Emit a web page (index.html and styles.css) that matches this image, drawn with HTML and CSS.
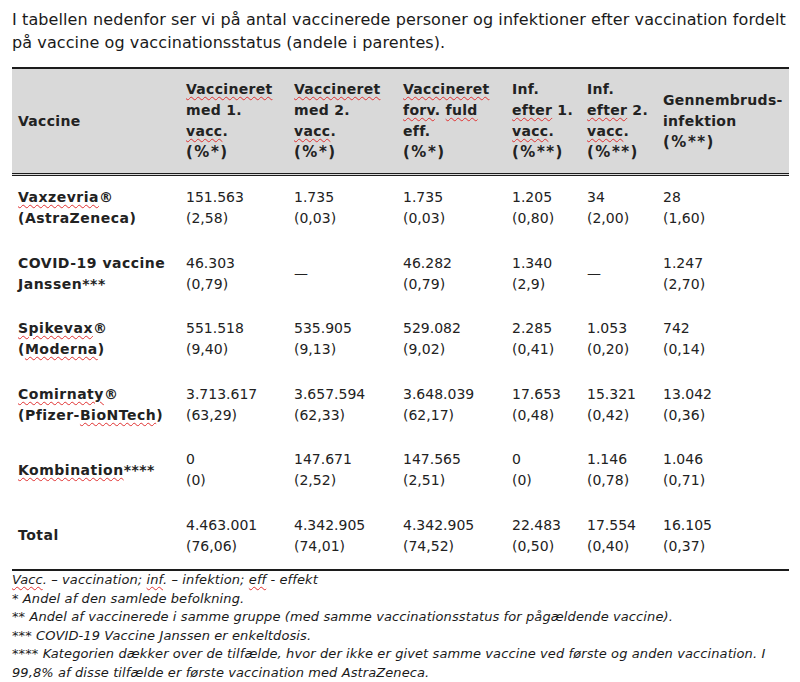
FILE: index.html
```html
<!DOCTYPE html>
<html lang="da">
<head>
<meta charset="utf-8">
<title>Vaccinationstabel</title>
<link rel="stylesheet" href="styles.css">
</head>
<body>
<p class="intro">I tabellen nedenfor ser vi på antal vaccinerede personer og infektioner efter vaccination fordelt på vaccine og vaccinationsstatus (andele i parentes).</p>
<table class="vt">
  <colgroup>
    <col class="c1"><col class="c2"><col class="c3"><col class="c4"><col class="c5"><col class="c6"><col class="c7">
  </colgroup>
  <thead>
    <tr>
      <th>Vaccine</th>
      <th><span class="sp">Vaccineret</span><br>med 1.<br><span class="sp">vacc</span>.<br><span class="pct">(%*)</span></th>
      <th><span class="sp">Vaccineret</span><br>med 2.<br><span class="sp">vacc</span>.<br><span class="pct">(%*)</span></th>
      <th><span class="sp">Vaccineret</span><br><span class="sp">forv</span>. <span class="sp">fuld</span><br>eff.<br><span class="pct">(%*)</span></th>
      <th>Inf.<br><span class="sp">efter</span> 1.<br><span class="sp">vacc</span>.<br><span class="pct">(%**)</span></th>
      <th>Inf.<br><span class="sp">efter</span> 2.<br><span class="sp">vacc</span>.<br><span class="pct">(%**)</span></th>
      <th>Gennembruds-<br>infektion<br><span class="pct">(%**)</span></th>
    </tr>
  </thead>
  <tbody>
    <tr>
      <td class="name"><span class="sp">Vaxzevria</span>®<br>(AstraZeneca)</td>
      <td>151.563<br>(2,58)</td><td>1.735<br>(0,03)</td><td>1.735<br>(0,03)</td><td>1.205<br>(0,80)</td><td>34<br>(2,00)</td><td>28<br>(1,60)</td>
    </tr>
    <tr>
      <td class="name">COVID-19 vaccine<br>Janssen***</td>
      <td>46.303<br>(0,79)</td><td>—</td><td>46.282<br>(0,79)</td><td>1.340<br>(2,9)</td><td>—</td><td>1.247<br>(2,70)</td>
    </tr>
    <tr>
      <td class="name"><span class="sp">Spikevax</span>®<br>(<span class="sp">Moderna</span>)</td>
      <td>551.518<br>(9,40)</td><td>535.905<br>(9,13)</td><td>529.082<br>(9,02)</td><td>2.285<br>(0,41)</td><td>1.053<br>(0,20)</td><td>742<br>(0,14)</td>
    </tr>
    <tr>
      <td class="name"><span class="sp">Comirnaty</span>®<br>(Pfizer-<span class="sp">BioNTech</span>)</td>
      <td>3.713.617<br>(63,29)</td><td>3.657.594<br>(62,33)</td><td>3.648.039<br>(62,17)</td><td>17.653<br>(0,48)</td><td>15.321<br>(0,42)</td><td>13.042<br>(0,36)</td>
    </tr>
    <tr>
      <td class="name"><span class="sp">Kombination</span>****</td>
      <td>0<br>(0)</td><td>147.671<br>(2,52)</td><td>147.565<br>(2,51)</td><td>0<br>(0)</td><td>1.146<br>(0,78)</td><td>1.046<br>(0,71)</td>
    </tr>
    <tr>
      <td class="name">Total</td>
      <td>4.463.001<br>(76,06)</td><td>4.342.905<br>(74,01)</td><td>4.342.905<br>(74,52)</td><td>22.483<br>(0,50)</td><td>17.554<br>(0,40)</td><td>16.105<br>(0,37)</td>
    </tr>
  </tbody>
</table>
<div class="notes">
  <p><span class="sp">Vacc</span>. – vaccination; <span class="sp">inf</span>. – infektion; <span class="sp">eff</span> - effekt</p>
  <p>* Andel af den samlede befolkning.</p>
  <p>** Andel af vaccinerede i samme gruppe (med samme vaccinationsstatus for pågældende vaccine).</p>
  <p>*** COVID-19 Vaccine Janssen er enkeltdosis.</p>
  <p>**** Kategorien dækker over de tilfælde, hvor der ikke er givet samme vaccine ved første og anden vaccination. I 99,8% af disse tilfælde er første vaccination med AstraZeneca.</p>
</div>
</body>
</html>
```
FILE: styles.css
```css
html, body {
  margin: 0;
  padding: 0;
  background: #ffffff;
}
body {
  font-family: "DejaVu Sans", Verdana, sans-serif;
  color: #222222;
  padding: 8px 8px 0 12px;
}
.intro {
  margin: 0;
  width: 782px;
  font-size: 16px;
  letter-spacing: 0.1px;
  line-height: 23px;
  color: #1a1a1a;
}
.vt {
  margin-top: 13px;
  width: 777px;
  border-collapse: collapse;
  table-layout: fixed;
  font-size: 14px;
  line-height: 21px;
}
.c1 { width: 168px; }
.c2 { width: 108px; }
.c3 { width: 109px; }
.c4 { width: 109px; }
.c5 { width: 75px; }
.c6 { width: 76px; }
.c7 { width: 132px; }
.vt thead tr {
  background: #d9d9d9;
  border-top: 2px solid #1c1c1c;
  border-bottom: 3px double #1c1c1c;
}
.vt th {
  text-align: left;
  font-weight: bold;
  letter-spacing: 0.3px;
  vertical-align: middle;
  padding: 10px 2px 10px 6px;
  color: #222222;
  white-space: nowrap;
}
.pct {
  font-size: 15px;
  letter-spacing: 1.5px;
}
.vt td {
  vertical-align: middle;
  padding: 11px 2px 12.5px 6px;
  color: #222222;
  white-space: nowrap;
}
.vt td.name {
  font-weight: bold;
  letter-spacing: 0.5px;
}
.vt tbody tr:last-child {
  border-bottom: 2px solid #1c1c1c;
}
.sp {
  text-decoration: underline wavy #e03030;
  text-decoration-thickness: 1px;
  text-underline-offset: 2px;
}
.notes {
  width: 777px;
  font-size: 13px;
  letter-spacing: 0.1px;
  line-height: 18.5px;
  font-style: italic;
  color: #1a1a1a;
}
.notes p {
  margin: 0;
}
```
